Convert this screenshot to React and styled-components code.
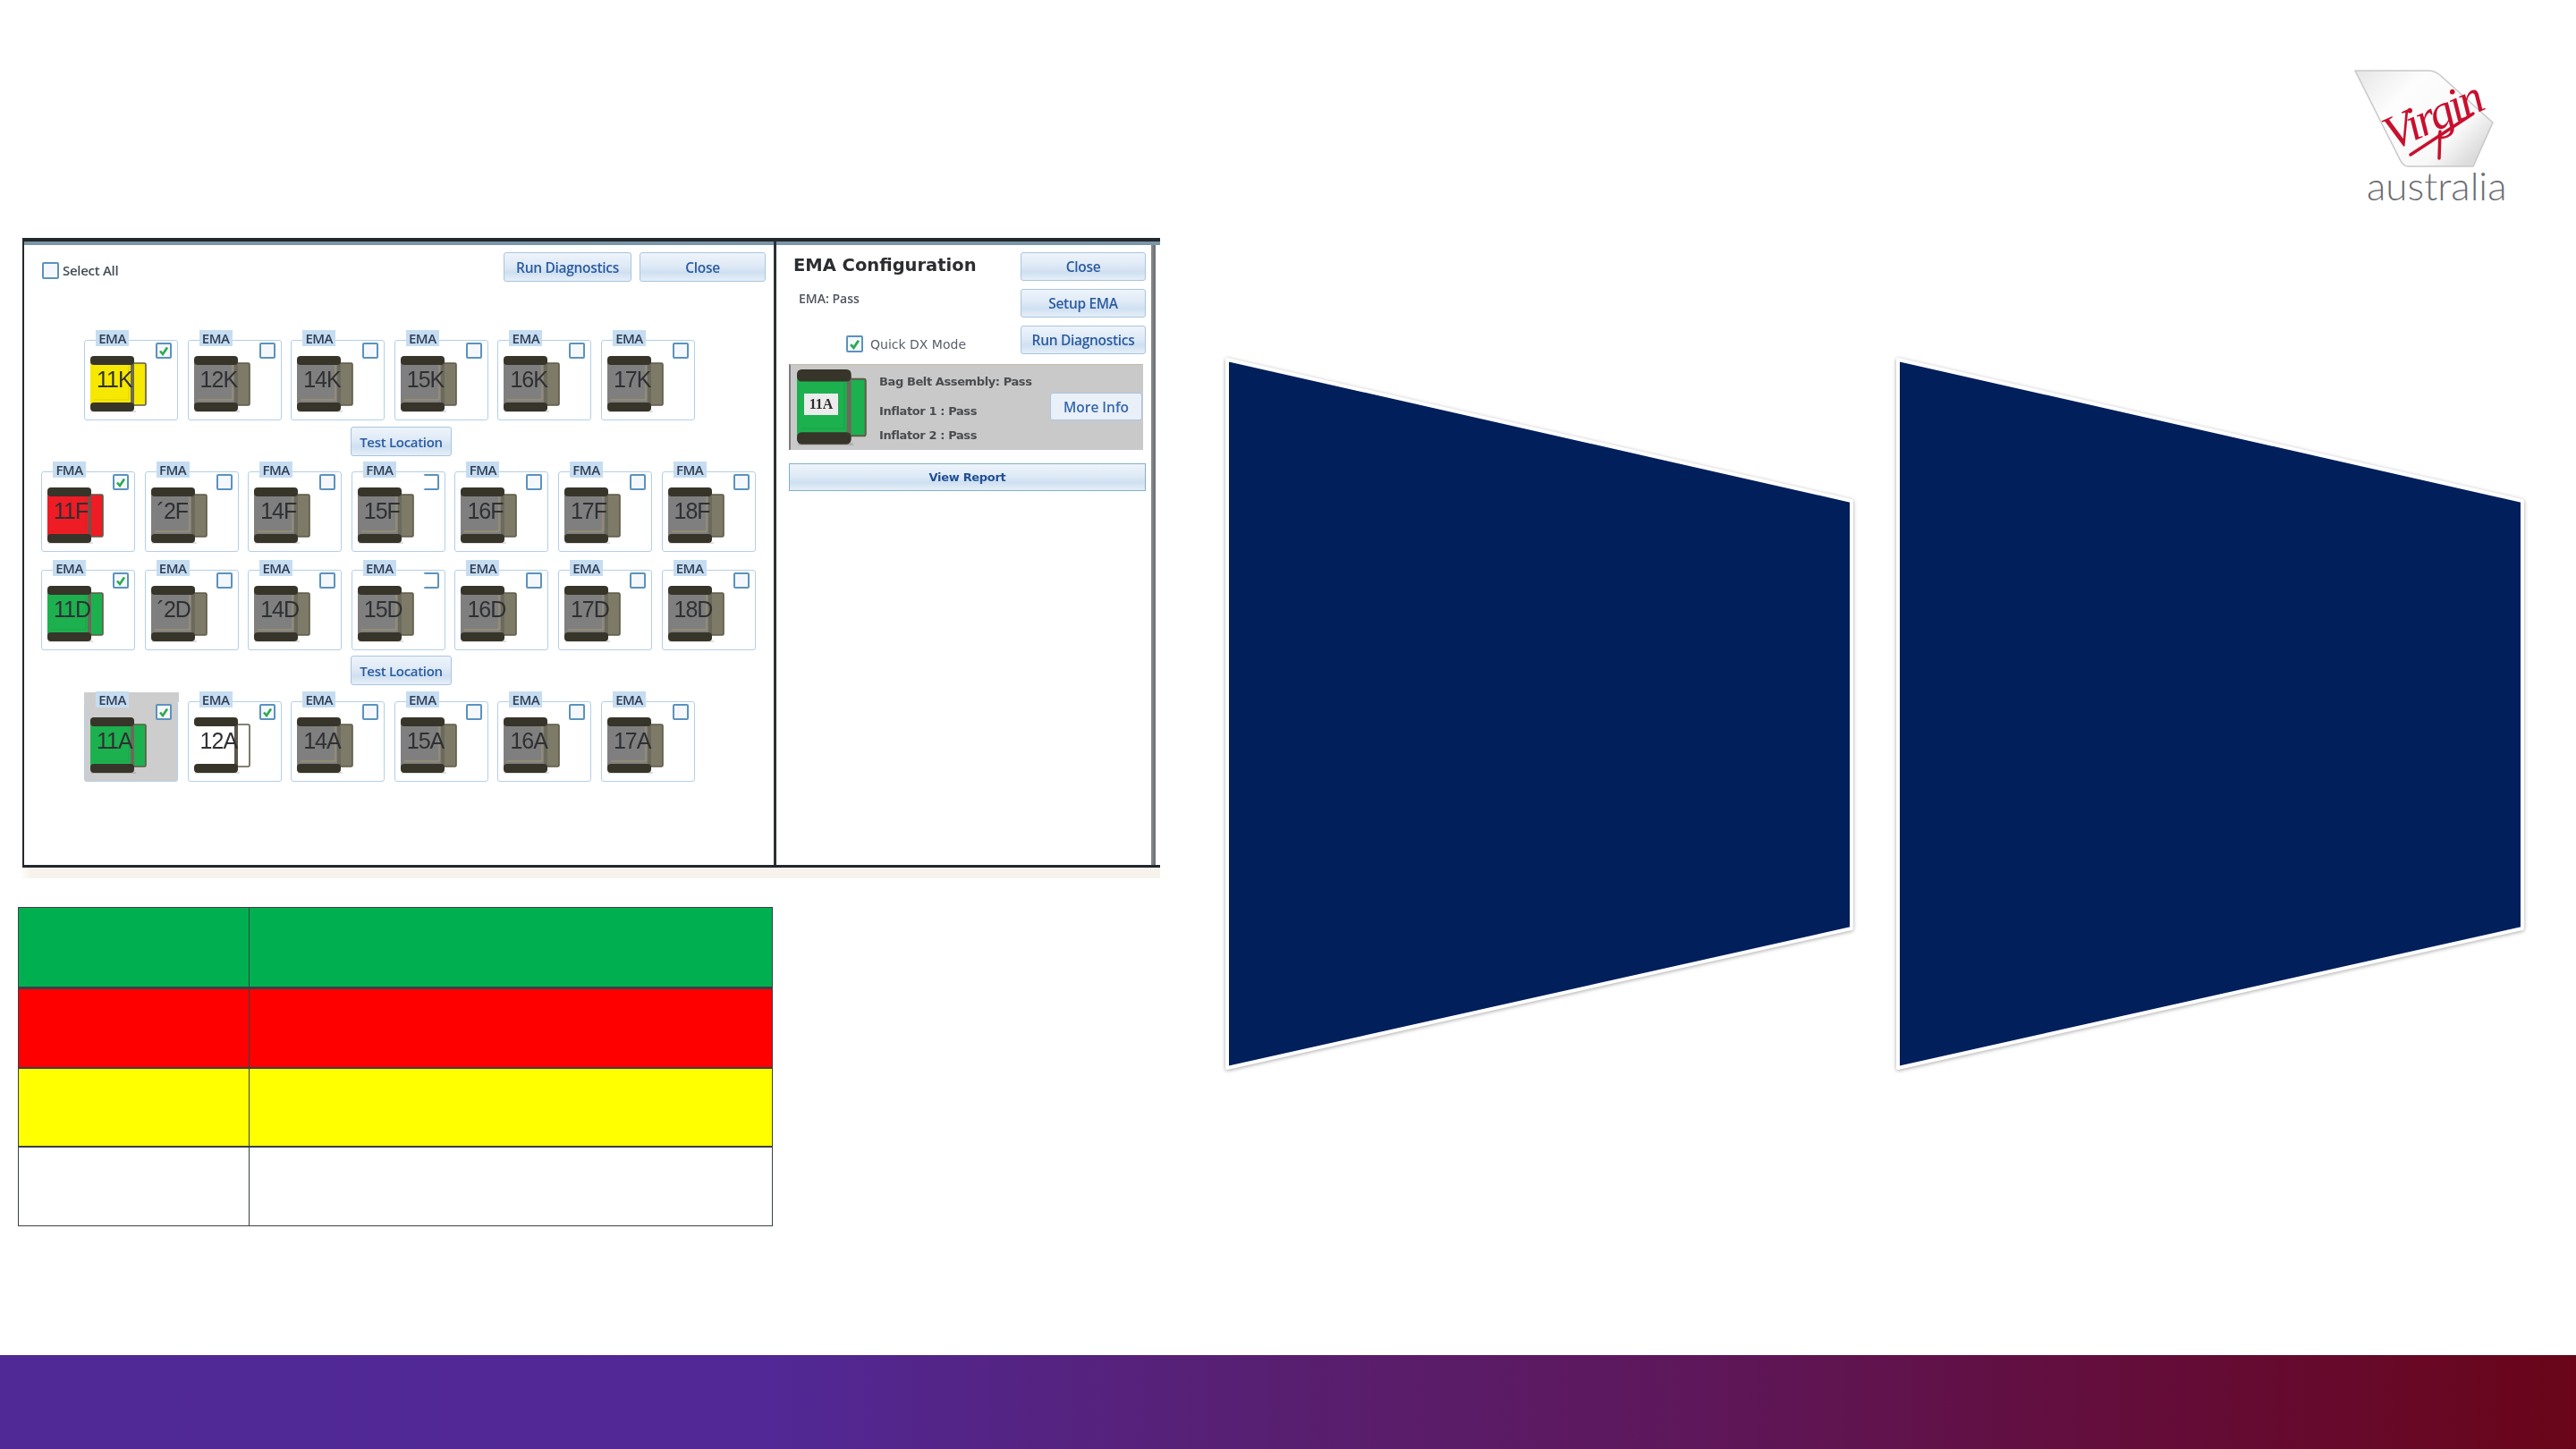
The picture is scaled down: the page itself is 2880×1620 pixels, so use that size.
import React from 'react'
import styled, { createGlobalStyle } from 'styled-components'

const GlobalStyle = createGlobalStyle`
  html, body {
    margin: 0;
    padding: 0;
    background: #fff;
  }
`

const Page = styled.div`
  width: 2880px;
  height: 1620px;
  display: flex;
  flex-direction: column;
  overflow: hidden;
  background: #fff;
  font-family: 'Open Sans', 'Liberation Sans', sans-serif;
`

const Main = styled.div`
  flex: 1;
  display: flex;
  align-items: flex-start;
`

const Footer = styled.div`
  height: 105px;
  background: linear-gradient(90deg, #512996 0%, #512895 30%, #581f70 50%, #5e175a 66%, #640c36 85%, #6a0519 100%);
`

const LeftColumn = styled.div`
  width: 1277px;
  margin-left: 20px;
  padding-top: 266px;
`

const ShotBacking = styled.div`
  margin-left: 2px;
  padding: 0 0 12px 3px;
  background: linear-gradient(90deg, #fff 0, #f7f3ec 12px);
`

const Shot = styled.div`
  height: 704px;
  display: flex;
  box-sizing: border-box;
  background: #fff;
  border-top: 4px solid #23282c;
  border-left: 2px solid #23282c;
  border-bottom: 3px solid #20282e;
  filter: blur(0.55px);
`

const LeftPane = styled.div`
  width: 838px;
  flex: none;
  box-sizing: border-box;
  border-top: 4px solid #7a96a8;
  padding-top: 8px;
`

const Toolbar = styled.div`
  display: flex;
  align-items: flex-start;
  padding: 0 9px 0 20px;
  gap: 9px;
  height: 33px;
`

const SelectAll = styled.label`
  flex: 1;
  display: flex;
  align-items: center;
  gap: 4px;
  margin-top: 10px;
  font-size: 15px;
  font-weight: 600;
  color: #444c56;
  letter-spacing: -0.3px;
`

const Box = styled.span`
  width: ${props => props.size || 18}px;
  height: ${props => props.size || 18}px;
  flex: none;
  box-sizing: border-box;
  display: flex;
  align-items: center;
  justify-content: center;
  background: #f4f8fc;
  border: 2px solid #5b92bd;
  border-radius: 2px;
`

const Button = styled.button`
  width: ${props => props.w}px;
  height: ${props => props.h || 33}px;
  flex: none;
  padding: 0;
  box-sizing: border-box;
  background: linear-gradient(180deg, #eef4fb 0%, #dfeaf6 45%, #cfe0f1 70%, #e6eff8 100%);
  border: 1.5px solid #a9c5e0;
  border-radius: 3px;
  color: #2a5a9f;
  font-family: 'Open Sans', sans-serif;
  font-size: 15.5px;
  font-weight: 600;
  letter-spacing: -0.3px;
`

const CardRow = styled.div`
  display: grid;
  grid-template-columns: repeat(${props => props.count}, 105px);
  column-gap: 10.6px;
  padding-left: ${props => props.left}px;
  margin-top: ${props => props.top}px;
`

const Card = styled.div`
  position: relative;
  height: 90px;
  box-sizing: border-box;
  padding: 17px 0 0 6px;
  border: 1.5px solid #b3cfe9;
  border-radius: 3px;
  background: ${props => (props.selected ? '#cdcdcd' : '#fff')};

  &::before {
    content: '';
    display: ${props => (props.selected ? 'block' : 'none')};
    position: absolute;
    left: -1.5px;
    right: -1.5px;
    top: -11px;
    height: 11px;
    background: #cdcdcd;
  }
`

const CardLabel = styled.span`
  position: absolute;
  left: 12px;
  top: -12px;
  width: 37px;
  height: 18px;
  background: #c6ddf1;
  color: #2f3d52;
  font-size: 15px;
  font-weight: 600;
  line-height: 18px;
  text-align: center;
  letter-spacing: -0.5px;
`

const CardCheck = styled.span`
  position: absolute;
  top: 2px;
  right: 6px;
`

const CutBox = styled(Box)`
  border-left-color: transparent;
  background: #fff;
`

const SeatWrap = styled.div`
  position: relative;
  width: ${props => props.w}px;
  height: ${props => props.h}px;
`

const SeatNumber = styled.span`
  position: absolute;
  left: 7px;
  top: 12px;
  font-family: 'Liberation Sans', sans-serif;
  font-size: 25px;
  line-height: 28px;
  letter-spacing: -1px;
  color: #2e3033;
`

const TestButton = styled(Button)`
  display: block;
  margin: ${props => props.top}px 0 0 365px;
  font-size: 15px;
`

const Divider = styled.div`
  width: 3px;
  flex: none;
  background: #2c3034;
`

const RightPane = styled.div`
  width: 419px;
  flex: none;
  box-sizing: border-box;
  border-top: 4px solid #7a96a8;
  padding: 8px 6px 0 14px;
`

const RightEdge = styled.div`
  flex: 1;
  border-top: 4px solid #7a96a8;
  background: linear-gradient(90deg, #8a8d90 0, #6a6d70 5px, #fff 5px);
`

const ConfigTop = styled.div`
  display: flex;
  justify-content: space-between;
  height: 125px;
`

const ConfigInfo = styled.div`
  display: flex;
  flex-direction: column;
  padding-left: 5px;
`

const ConfigTitle = styled.div`
  font-family: 'DejaVu Sans', sans-serif;
  font-size: 19.5px;
  font-weight: 700;
  line-height: 28px;
  color: #2b2d30;
  margin-top: 1px;
`

const ConfigStatus = styled.div`
  font-size: 14px;
  font-weight: 600;
  line-height: 18px;
  color: #4e555c;
  margin: 14px 0 0 6px;
`

const QuickMode = styled.div`
  display: flex;
  align-items: center;
  gap: 8px;
  margin: 32px 0 0 59px;
  font-family: 'DejaVu Sans', sans-serif;
  font-size: 14px;
  color: #585f66;
`

const ConfigButtons = styled.div`
  display: flex;
  flex-direction: column;
  gap: 9px;
`

const DetailPanel = styled.div`
  height: 96px;
  margin-right: 3px;
  display: flex;
  box-sizing: border-box;
  background: #c9c9c9;
  border-left: 2px solid #7d7d7d;
  border-top: 1px solid #c4b9a6;
  padding: 5px 0 0 7px;
`

const BigNumber = styled.span`
  position: absolute;
  left: 8px;
  top: 27px;
  width: 38px;
  height: 24px;
  background: #ececec;
  color: #2d2d2d;
  font-family: 'Liberation Serif', serif;
  font-size: 16px;
  font-weight: 700;
  line-height: 24px;
  text-align: center;
`

const DetailText = styled.div`
  flex: 1;
  padding: 6px 0 0 14px;
  font-family: 'DejaVu Sans', sans-serif;
  font-size: 13px;
  font-weight: 600;
  color: #4a4d50;
  letter-spacing: -0.4px;
`

const DetailLine = styled.div`
  margin-top: ${props => props.top}px;
  line-height: 16px;
`

const MoreInfo = styled(Button)`
  margin: 26px 1px 0 0;
  background: #e9f0f8;
  color: #3768ab;
  letter-spacing: 0;
`

const ViewReport = styled(Button)`
  display: block;
  margin-top: 15px;
  border-radius: 0;
  font-family: 'DejaVu Sans', sans-serif;
  font-size: 13px;
  font-weight: 700;
  color: #1f4f96;
  border-color: #7fb0c8;
`

const Legend = styled.table`
  width: 844px;
  margin-top: 32px;
  border-collapse: collapse;
  table-layout: fixed;
`

const LegendCell = styled.td`
  height: ${props => props.h}px;
  padding: 0;
  background: ${props => props.color};
  border: 1px solid #3a4048;
  border-top-width: ${props => props.rule}px;
`

const RightColumn = styled.div`
  flex: 1;
  padding-left: 73px;
`

const LogoRow = styled.div`
  height: 400px;
  box-sizing: border-box;
  padding: 75px 78px 0 0;
  display: flex;
  justify-content: flex-end;
`

const Logo = styled.div`
  position: relative;
  width: 172px;
  height: 150px;
`

const VirginWord = styled.span`
  position: absolute;
  left: 32px;
  top: 27px;
  font-family: 'Liberation Serif', serif;
  font-style: italic;
  font-weight: 400;
  font-size: 54px;
  line-height: 54px;
  letter-spacing: -3px;
  color: #c8102e;
  transform: rotate(-24deg);
`

const AustraliaWord = styled.div`
  margin: -6px 0 0 16px;
  font-family: 'Lato', sans-serif;
  font-weight: 300;
  font-size: 44px;
  line-height: 44px;
  color: #6d6e71;
`

const TrapezoidRow = styled.div`
  display: flex;
  gap: 48px;
`

const seatColors = {
  gray: { body: '#7f7f7f', flap: '#7d7a68', line: '#a8986a', post: '#6c6a5c' },
  yellow: { body: '#f6e800', flap: '#f6e800', line: '#e0d000', post: '#6f6a50' },
  red: { body: '#ee1c25', flap: '#ee1c25', line: '#e01c22', post: '#75504a' },
  green: { body: '#1db04f', flap: '#1db04f', line: '#1aa549', post: '#6b6a5a' },
  white: { body: '#fff', flap: '#fff', line: '#fff', post: '#5d5648' }
}

const SeatGraphic = ({ tone, width, height }) => {
  const c = seatColors[tone]
  return (
    <svg width={width} height={height} viewBox="0 0 63 63" preserveAspectRatio="none" style={{ display: 'block' }}>
      <rect x="1" y="61" width="50" height="2" fill="#000" opacity="0.12" />
      <rect x="46" y="8" width="16" height="47" rx="1.5" fill={c.flap} stroke="#5f5a48" strokeWidth="1.6" />
      <rect x="0" y="6" width="47" height="50" fill={c.body} />
      <path d="M4 49 H43 V10" fill="none" stroke={c.line} strokeWidth="1" />
      <rect x="45" y="6" width="4" height="50" fill={c.post} />
      <rect x="0" y="0" width="49" height="10" rx="4" fill="#37342a" />
      <rect x="0" y="52" width="49" height="10" rx="4" fill="#37342a" />
    </svg>
  )
}

const CheckMark = ({ size = 12 }) => (
  <svg width={size} height={size} viewBox="0 0 12 12">
    <path d="M2 6.5 L5 10 L10 2.5" fill="none" stroke="#2fa84f" strokeWidth="2.6" />
  </svg>
)

const SeatCard = ({ name, number, tone = 'gray', checked, cut, selected }) => {
  const Check = cut ? CutBox : Box
  return (
    <Card selected={selected}>
      <CardLabel>{name}</CardLabel>
      <CardCheck>
        <Check>{checked && <CheckMark />}</Check>
      </CardCheck>
      <SeatWrap w={63} h={63}>
        <SeatGraphic tone={tone} width={63} height={63} />
        <SeatNumber>{number}</SeatNumber>
      </SeatWrap>
    </Card>
  )
}

const rowK = [
  { number: '11K', tone: 'yellow', checked: true },
  { number: '12K' },
  { number: '14K' },
  { number: '15K' },
  { number: '16K' },
  { number: '17K' }
]
const rowF = [
  { number: '11F', tone: 'red', checked: true },
  { number: '´2F' },
  { number: '14F' },
  { number: '15F', cut: true },
  { number: '16F' },
  { number: '17F' },
  { number: '18F' }
]
const rowD = [
  { number: '11D', tone: 'green', checked: true },
  { number: '´2D' },
  { number: '14D' },
  { number: '15D', cut: true },
  { number: '16D' },
  { number: '17D' },
  { number: '18D' }
]
const rowA = [
  { number: '11A', tone: 'green', checked: true, selected: true },
  { number: '12A', tone: 'white', checked: true },
  { number: '14A' },
  { number: '15A' },
  { number: '16A' },
  { number: '17A' }
]

const legendRows = [
  { color: '#00b050', h: 88, rule: 1 },
  { color: '#ff0000', h: 87, rule: 3 },
  { color: '#ffff00', h: 86, rule: 2 },
  { color: '#fff', h: 87, rule: 2 }
]

const Seats = ({ seats, name, left, top }) => (
  <CardRow count={seats.length} left={left} top={top}>
    {seats.map(seat => (
      <SeatCard key={seat.number} name={name} {...seat} />
    ))}
  </CardRow>
)

const Trapezoid = () => (
  <svg width="702" height="795" viewBox="0 0 702 795" style={{ display: 'block', overflow: 'visible' }}>
    <polygon
      points="2,2 700,160 700,638 2,794"
      fill="#001f5b"
      stroke="#fff"
      strokeWidth="4"
      strokeLinejoin="round"
      style={{ filter: 'drop-shadow(0 1px 2px rgba(0,0,0,0.35))' }}
    />
  </svg>
)

const TailMark = () => (
  <svg width="172" height="116" viewBox="0 0 172 116" style={{ display: 'block' }}>
    <defs>
      <linearGradient id="tailFill" x1="0" y1="0" x2="1" y2="0.7">
        <stop offset="0" stopColor="#e6e6e6" />
        <stop offset="0.35" stopColor="#fdfdfd" />
        <stop offset="0.8" stopColor="#f8f8f8" />
        <stop offset="1" stopColor="#dcdcdc" />
      </linearGradient>
    </defs>
    <path
      d="M3 4 H85 Q92 4 98 9 L157 62 L135 111 H63 Q57 111 54 105 Z"
      fill="url(#tailFill)"
      stroke="#c9c9c9"
      strokeWidth="1.6"
      strokeLinejoin="round"
    />
    <path d="M65 98 L135 52" fill="none" stroke="#c8102e" strokeWidth="3.5" strokeLinecap="round" />
    <path d="M98 72 L97 102" fill="none" stroke="#c8102e" strokeWidth="3.5" strokeLinecap="round" />
  </svg>
)

export default function App() {
  return (
    <Page>
      <GlobalStyle />
      <Main>
        <LeftColumn>
          <ShotBacking>
            <Shot>
              <LeftPane>
                <Toolbar>
                  <SelectAll>
                    <Box size={19} />
                    Select All
                  </SelectAll>
                  <Button w={143}>Run Diagnostics</Button>
                  <Button w={141}>Close</Button>
                </Toolbar>
                <Seats seats={rowK} name="EMA" left={67} top={65} />
                <TestButton w={113} top={7}>Test Location</TestButton>
                <Seats seats={rowF} name="FMA" left={19} top={17} />
                <Seats seats={rowD} name="EMA" left={19} top={20} />
                <TestButton w={113} top={6}>Test Location</TestButton>
                <Seats seats={rowA} name="EMA" left={67} top={18} />
              </LeftPane>
              <Divider />
              <RightPane>
                <ConfigTop>
                  <ConfigInfo>
                    <ConfigTitle>EMA Configuration</ConfigTitle>
                    <ConfigStatus>EMA: Pass</ConfigStatus>
                    <QuickMode>
                      <Box size={19}>
                        <CheckMark size={13} />
                      </Box>
                      Quick DX Mode
                    </QuickMode>
                  </ConfigInfo>
                  <ConfigButtons>
                    <Button w={140} h={32}>Close</Button>
                    <Button w={140} h={32}>Setup EMA</Button>
                    <Button w={140} h={32}>Run Diagnostics</Button>
                  </ConfigButtons>
                </ConfigTop>
                <DetailPanel>
                  <SeatWrap w={78} h={85}>
                    <SeatGraphic tone="green" width={78} height={85} />
                    <BigNumber>11A</BigNumber>
                  </SeatWrap>
                  <DetailText>
                    <DetailLine top={0}>Bag Belt Assembly: Pass</DetailLine>
                    <DetailLine top={17}>Inflator 1 : Pass</DetailLine>
                    <DetailLine top={11}>Inflator 2 : Pass</DetailLine>
                  </DetailText>
                  <MoreInfo w={103} h={31}>More Info</MoreInfo>
                </DetailPanel>
                <ViewReport w={399} h={31}>View Report</ViewReport>
              </RightPane>
              <RightEdge />
            </Shot>
          </ShotBacking>
          <Legend>
            <colgroup>
              <col style={{ width: 258 }} />
              <col />
            </colgroup>
            <tbody>
              {legendRows.map(row => (
                <tr key={row.color}>
                  <LegendCell {...row} />
                  <LegendCell {...row} />
                </tr>
              ))}
            </tbody>
          </Legend>
        </LeftColumn>
        <RightColumn>
          <LogoRow>
            <Logo>
              <TailMark />
              <VirginWord>Virgin</VirginWord>
              <AustraliaWord>australia</AustraliaWord>
            </Logo>
          </LogoRow>
          <TrapezoidRow>
            <Trapezoid />
            <Trapezoid />
          </TrapezoidRow>
        </RightColumn>
      </Main>
      <Footer />
    </Page>
  )
}
